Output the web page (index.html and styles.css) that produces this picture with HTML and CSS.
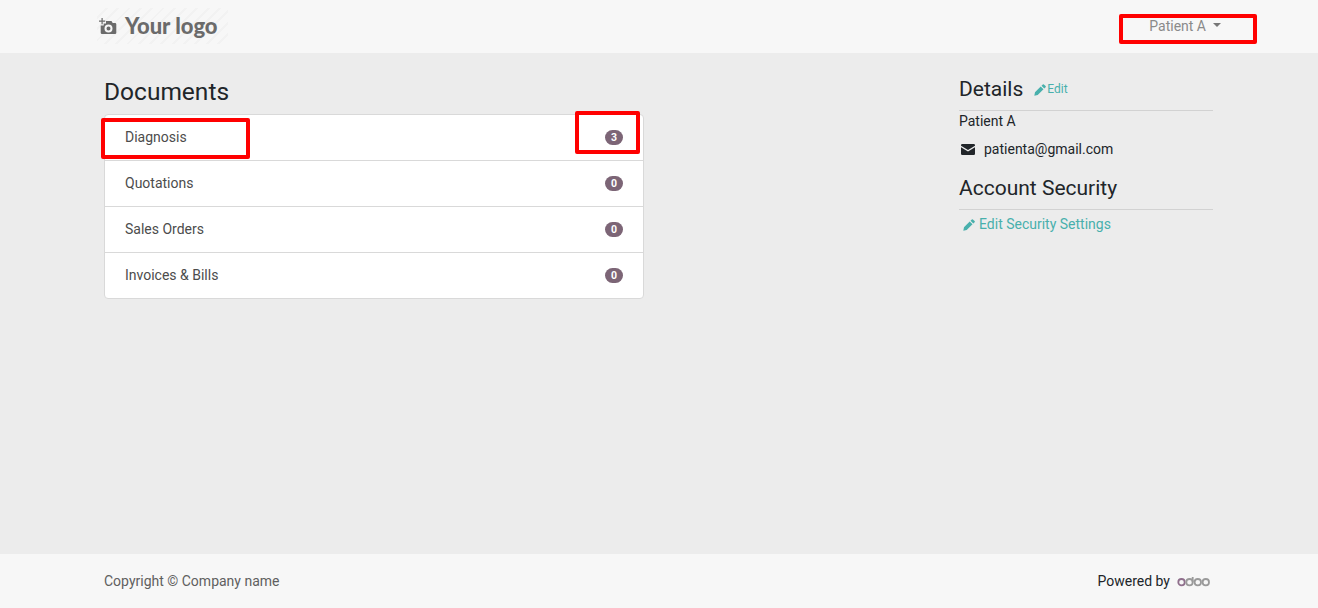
FILE: index.html
```html
<!DOCTYPE html>
<html lang="en">
<head>
    <meta charset="UTF-8">
    <title>My Account</title>
    <link rel="stylesheet" href="styles.css">
</head>
<body>
    <header class="topbar">
        <div class="logo">
            <svg class="logo-icon" viewBox="0 0 18 17" width="18" height="17">
                <path d="M0 2.500h2.500V0h1.200v2.500h2.500v1.200H3.700v2.500H2.500V3.700H0z" fill="#6b6b6b"/>
                <path fill-rule="evenodd" fill="#6b6b6b" d="M7 3h5.500l1.200 2H16a1.300 1.300 0 0 1 1.300 1.300v8.400A1.300 1.300 0 0 1 16 16H3a1.300 1.300 0 0 1-1.300-1.300V7.500h3V5.500H7zM9.500 6.500a4 4 0 1 0 0 8 4 4 0 0 0 0-8zM9.500 8.500a2 2 0 1 1 0 4 2 2 0 0 1 0-4z"/>
            </svg>
            <span class="logo-text">Your logo</span>
        </div>
        <div class="user-menu">
            <span>Patient A</span>
            <span class="caret"></span>
        </div>
    </header>

    <main class="content">
        <section class="documents">
            <h3 class="page-title">Documents</h3>
            <div class="doc-list">
                <div class="doc-item"><span>Diagnosis</span><span class="badge">3</span></div>
                <div class="doc-item"><span>Quotations</span><span class="badge">0</span></div>
                <div class="doc-item"><span>Sales Orders</span><span class="badge">0</span></div>
                <div class="doc-item"><span>Invoices &amp; Bills</span><span class="badge">0</span></div>
            </div>
        </section>

        <aside class="sidebar">
            <div class="side-head side-head-first">
                <h4>Details</h4>
                <a class="link link-small" href="#">
                    <svg class="pencil" viewBox="0 0 12 12" width="12" height="12"><path d="M8.800.400a.800.800 0 0 1 1.100 0l1.700 1.700a.800.800 0 0 1 0 1.100L10.300 4.500 7.500 1.700zM6.700 2.500l2.800 2.800-5.800 5.800-3.400.700.700-3.500z"/></svg>Edit
                </a>
            </div>
            <div class="name-line">Patient A</div>
            <div class="mail-line">
                <svg class="mail" viewBox="0 0 14 11" width="14" height="11"><path d="M0 1.200A1.200 1.200 0 0 1 1.200 0h11.600A1.200 1.200 0 0 1 14 1.200v.5L7 6 0 1.700zM0 3.200l7 4.300 7-4.300v6.600a1.200 1.200 0 0 1-1.200 1.200H1.200A1.200 1.200 0 0 1 0 9.800z"/></svg>
                <span>patienta@gmail.com</span>
            </div>
            <div class="side-head side-head-second">
                <h4>Account Security</h4>
            </div>
            <a class="link security-link" href="#">
                <svg class="pencil" viewBox="0 0 12 12" width="12" height="12"><path d="M8.800.400a.800.800 0 0 1 1.100 0l1.700 1.700a.800.800 0 0 1 0 1.100L10.300 4.500 7.500 1.700zM6.700 2.500l2.800 2.800-5.800 5.800-3.400.700.700-3.500z"/></svg>Edit Security Settings
            </a>
        </aside>
    </main>

    <footer class="footer">
        <span>Copyright © Company name</span>
        <div class="powered">
            <span>Powered by</span>
            <svg class="odoo" viewBox="0 0 34 11" width="34" height="11" fill="none" stroke-width="1.800">
                <circle cx="4.500" cy="6.200" r="3.200" stroke="#8f6f8c"/>
                <circle cx="12.500" cy="6.200" r="3.200" stroke="#9a9a9a"/>
                <path d="M15.700 6.200V1" stroke="#9a9a9a"/>
                <circle cx="20.800" cy="6.200" r="3.200" stroke="#9a9a9a"/>
                <circle cx="28.800" cy="6.200" r="3.200" stroke="#9a9a9a"/>
            </svg>
        </div>
    </footer>

    <!-- red annotation boxes -->
    <div class="mark mark-user"></div>
    <div class="mark mark-diagnosis"></div>
    <div class="mark mark-count"></div>
</body>
</html>
```

FILE: styles.css
```css
html, body {
    height: 100%;
}
body {
    font-family: 'Roboto', sans-serif;
    font-size: 14px;
    line-height: 21px;
    margin: 0;
    background: #ececec;
    color: #212529;
    display: flex;
    flex-direction: column;
    position: relative;
    overflow: hidden;
}
.topbar {
    height: 53px;
    flex: none;
    background: #f7f7f7;
    display: flex;
    align-items: flex-start;
    justify-content: space-between;
    padding: 0 97px;
    box-sizing: border-box;
}
.logo {
    margin-top: 8px;
    width: 131px;
    height: 36px;
    display: flex;
    align-items: center;
    gap: 8px;
    padding-left: 2px;
    box-sizing: border-box;
    background: repeating-linear-gradient(135deg, #f7f7f7 0, #f7f7f7 6px, #f2f2f2 6px, #f2f2f2 8px);
}
.logo-icon {
    flex: none;
}
.logo-text {
    font-family: 'Lato', sans-serif;
    font-weight: 900;
    font-size: 22px;
    color: #6b6b6b;
    line-height: 36px;
}
.user-menu {
    margin-top: 16px;
    display: flex;
    align-items: center;
    gap: 7px;
    color: #8a8a8a;
    height: 21px;
}
.caret {
    width: 0;
    height: 0;
    border-top: 4px solid #777;
    border-left: 4px solid transparent;
    border-right: 4px solid transparent;
    margin-bottom: 3px;
}
.content {
    flex: 1;
    display: flex;
    justify-content: space-between;
    padding: 0 104px 0 104px;
}
.documents {
    width: 540px;
}
.page-title {
    font-size: 24.500px;
    font-weight: 400;
    line-height: 29px;
    margin: 24px 0 8px;
}
.doc-list {
    background: white;
    border: 1px solid #d9d9d9;
    border-radius: 4px;
}
.doc-item {
    height: 45px;
    padding: 0 20px;
    display: flex;
    align-items: center;
    justify-content: space-between;
    color: #4c4c4c;
    border-bottom: 1px solid #d9d9d9;
}
.doc-item:last-child {
    border-bottom: none;
}
.badge {
    background: #7c6576;
    color: white;
    font-size: 10.500px;
    font-weight: 700;
    line-height: 15px;
    width: 18px;
    text-align: center;
    border-radius: 8px;
    margin-bottom: 1px;
}
.sidebar {
    width: 254px;
    margin-right: 1px;
    padding-top: 22px;
}
.side-head {
    display: flex;
    align-items: center;
    gap: 11px;
    height: 28px;
    padding-bottom: 6px;
    border-bottom: 1px solid #d2d2d2;
}
.side-head h4 {
    font-size: 21px;
    font-weight: 400;
    line-height: 26px;
    margin: 0;
}
.side-head-first {
    padding-bottom: 7px;
}
.side-head-second {
    margin-top: 14px;
    padding-bottom: 7px;
}
.link {
    color: #48b0ac;
    text-decoration: none;
}
.link-small {
    font-size: 12px;
    display: flex;
    align-items: center;
    gap: 1px;
    margin-top: 1px;
}
.pencil {
    fill: #48b0ac;
    flex: none;
}
.name-line {
    height: 21px;
}
.mail-line {
    margin-top: 7px;
    display: flex;
    align-items: center;
    gap: 9px;
    padding-left: 2px;
}
.mail {
    fill: #212529;
    flex: none;
}
.security-link {
    display: flex;
    align-items: center;
    gap: 4px;
    margin-top: 4px;
    padding-left: 4px;
}
.footer {
    height: 54px;
    flex: none;
    background: #f7f7f7;
    display: flex;
    align-items: center;
    justify-content: space-between;
    padding: 0 107px 0 104px;
    color: #5f5f5f;
}
.powered {
    display: flex;
    align-items: center;
    gap: 7px;
    color: #212529;
}
.odoo {
    flex: none;
}
.mark {
    position: absolute;
    border: 4px solid #f00;
    border-radius: 2px;
    box-sizing: border-box;
}
.mark-user {
    left: 1119px;
    top: 14px;
    width: 138px;
    height: 30px;
}
.mark-diagnosis {
    left: 101px;
    top: 118px;
    width: 149px;
    height: 41px;
}
.mark-count {
    left: 575px;
    top: 111px;
    width: 65px;
    height: 43px;
}
```
